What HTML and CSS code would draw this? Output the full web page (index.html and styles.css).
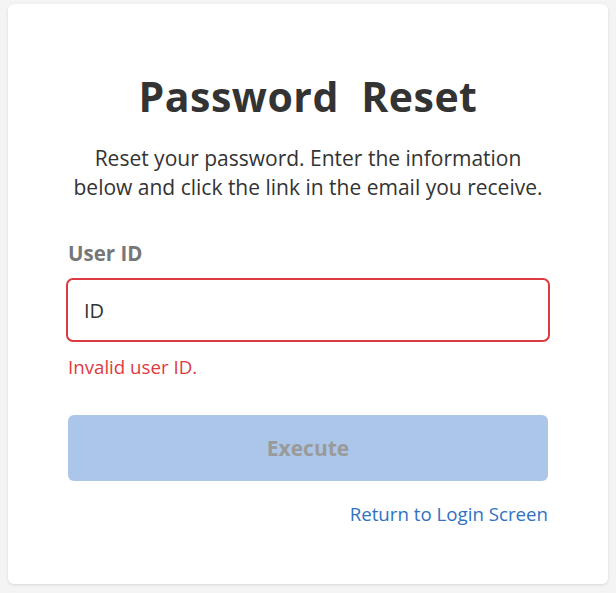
FILE: index.html
```html
<!DOCTYPE html>
<html>
<head>
<meta charset="utf-8">
<link rel="stylesheet" href="styles.css">
</head>
<body>
<div class="card">
  <h1 class="title">Password&nbsp; Reset</h1>
  <p class="desc">Reset your password. Enter the information<br>below and click the link in the email you receive.</p>
  <div class="form">
    <label class="label">User ID</label>
    <div class="input">ID</div>
    <div class="error">Invalid user ID.</div>
    <button class="btn">Execute</button>
    <div class="links"><a class="link">Return to Login Screen</a></div>
  </div>
</div>
</body>
</html>
```

FILE: styles.css
```css
html, body { margin: 0; padding: 0; }
body {
  background: #f4f4f4;
  font-family: "Open Sans", "Noto Sans", sans-serif;
  color: #333;
  padding: 4px 8px 8px 8px;
}
.card {
  background: #fff;
  border-radius: 6px;
  box-shadow: 0 1px 3px rgba(0,0,0,0.12);
  height: 580px;
  box-sizing: border-box;
  padding: 64px 0 0 0;
}
.title {
  margin: 0;
  text-align: center;
  font-size: 41px;
  font-weight: 700;
  line-height: 56px;
  color: #333;
  letter-spacing: 0.5px;
}
.desc {
  margin: 20px 0 0 0;
  text-align: center;
  font-size: 21px;
  line-height: 29px;
  color: #333;
}
.form {
  margin: 38px 58px 0 58px;
  display: flex;
  flex-direction: column;
}
.label {
  font-size: 20.5px;
  font-weight: 700;
  color: #777;
  line-height: 26px;
  padding-left: 2px;
}
.input {
  margin-top: 12px;
  height: 64px;
  box-sizing: border-box;
  border: 2px solid #db3a40;
  border-radius: 7px;
  padding: 0 16px;
  display: flex;
  align-items: center;
  font-size: 20px;
  color: #333;
}
.error {
  margin-top: 12px;
  padding-left: 2px;
  color: #e0393f;
  font-size: 18.7px;
  line-height: 26px;
}
.btn {
  margin: 35px 2px 0 2px;
  height: 66px;
  border: none;
  border-radius: 6px;
  background: #abc6e8;
  color: #9a9a9a;
  font-family: inherit;
  font-size: 21px;
  font-weight: 700;
}
.links {
  margin-top: 20px;
  display: flex;
  justify-content: flex-end;
  padding-right: 2px;
}
.link {
  color: #2f72c4;
  font-size: 18.7px;
  line-height: 26px;
}
```
